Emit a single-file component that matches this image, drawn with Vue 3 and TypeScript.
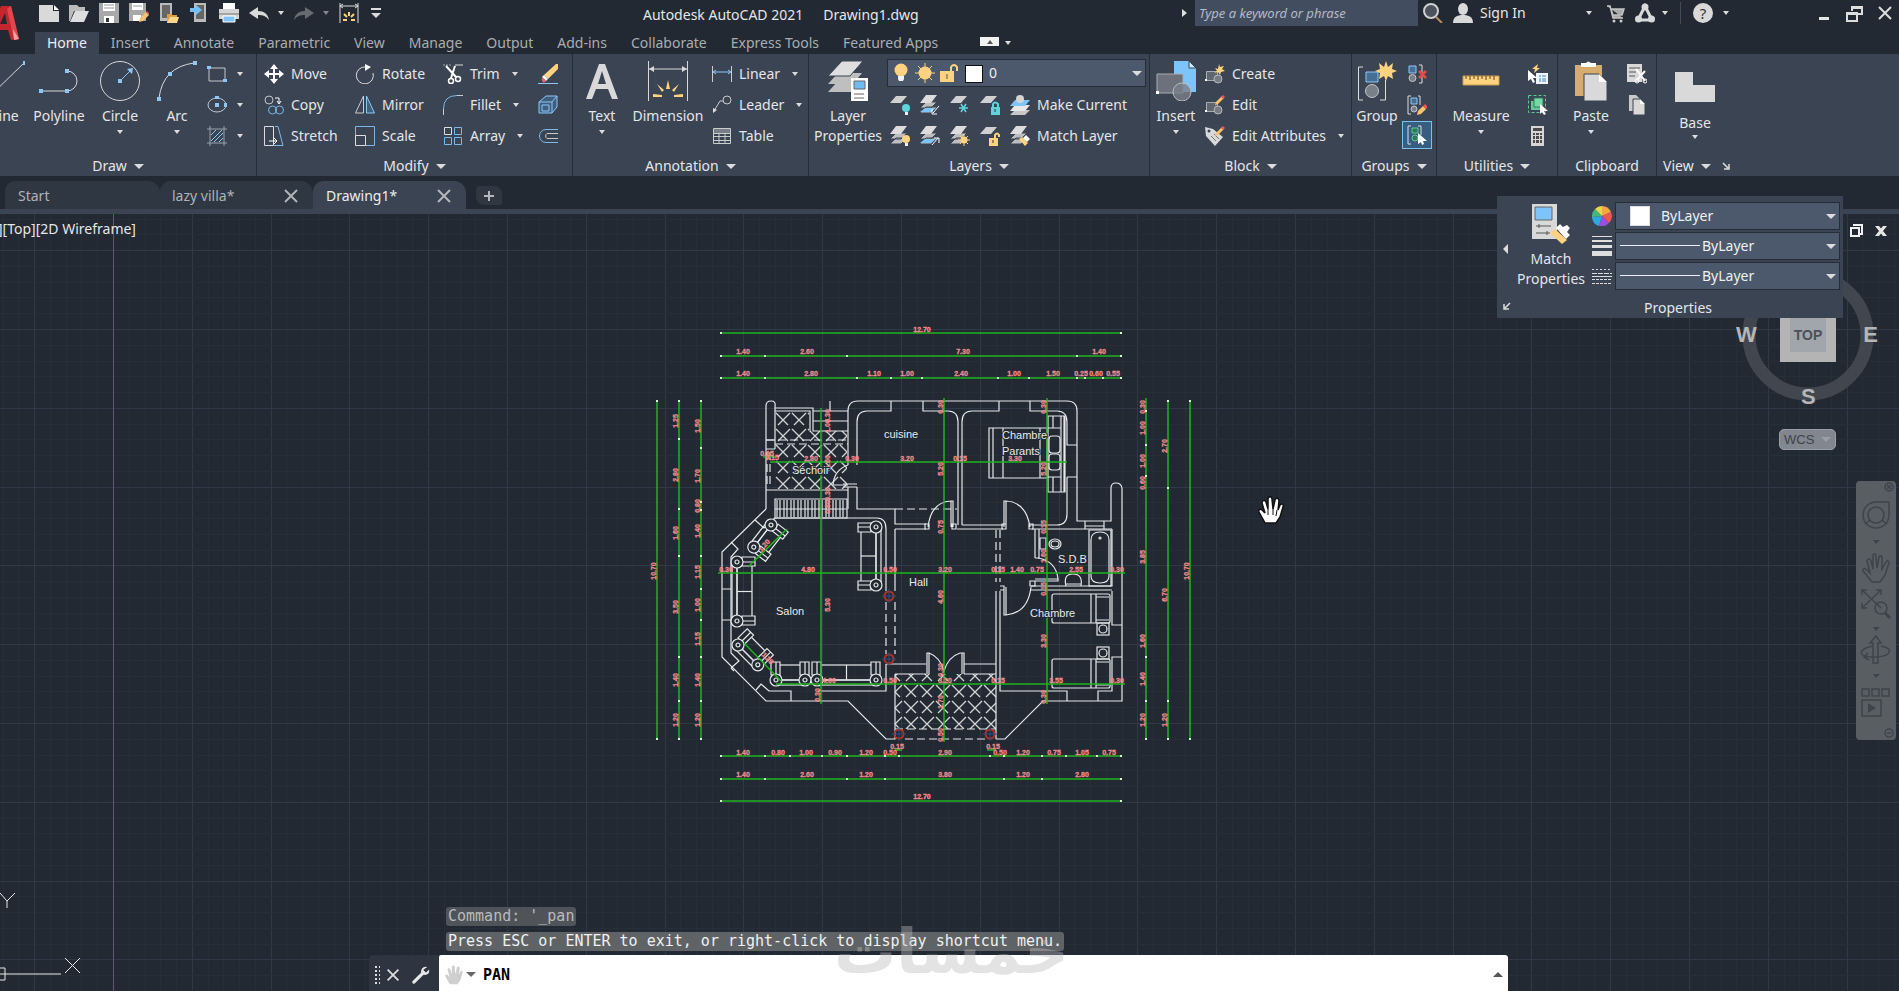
<script setup lang="ts">
import { ref } from 'vue'

interface Row { icon: string; label?: string; arrow?: boolean; on?: boolean; tip?: string }
interface Item { kind: 'big' | 'col' | 'layers'; cls?: string; icon?: string; lines?: string[]; arrow?: boolean; rows?: Row[] }
interface Panel { id: string; title: string; arrow: boolean; launcher?: boolean; items: Item[] }

const tabs = ['Home', 'Insert', 'Annotate', 'Parametric', 'View', 'Manage', 'Output', 'Add-ins', 'Collaborate', 'Express Tools', 'Featured Apps']
const command = ref('PAN')
const keyword = ref('')

const panels: Panel[] = [
  { id: 'draw', title: 'Draw', arrow: true, items: [
    { kind: 'big', cls: 'w-line', icon: 'line', lines: ['Line'] },
    { kind: 'big', cls: 'w-poly', icon: 'poly', lines: ['Polyline'] },
    { kind: 'big', cls: 'w-circle', icon: 'circle', lines: ['Circle'], arrow: true },
    { kind: 'big', cls: 'w-arc', icon: 'arc', lines: ['Arc'], arrow: true },
    { kind: 'col', cls: 'c-shapes', rows: [{ icon: 'rect', arrow: true, tip: 'Rectangle' }, { icon: 'ellipse', arrow: true, tip: 'Ellipse' }, { icon: 'hatch', arrow: true, tip: 'Hatch' }] },
  ] },
  { id: 'modify', title: 'Modify', arrow: true, items: [
    { kind: 'col', cls: 'c-mod1', rows: [{ icon: 'move', label: 'Move' }, { icon: 'copy', label: 'Copy' }, { icon: 'stretch', label: 'Stretch' }] },
    { kind: 'col', cls: 'c-mod2', rows: [{ icon: 'rotate', label: 'Rotate' }, { icon: 'mirror', label: 'Mirror' }, { icon: 'scale', label: 'Scale' }] },
    { kind: 'col', cls: 'c-mod3', rows: [{ icon: 'trim', label: 'Trim', arrow: true }, { icon: 'fillet', label: 'Fillet', arrow: true }, { icon: 'array', label: 'Array', arrow: true }] },
    { kind: 'col', rows: [{ icon: 'erase', tip: 'Erase' }, { icon: 'explode', tip: 'Explode' }, { icon: 'offset', tip: 'Offset' }] },
  ] },
  { id: 'annotation', title: 'Annotation', arrow: true, items: [
    { kind: 'big', cls: 'w-text', icon: 'text', lines: ['Text'], arrow: true },
    { kind: 'big', cls: 'w-dim', icon: 'dim', lines: ['Dimension'] },
    { kind: 'col', cls: 'c-ann', rows: [{ icon: 'linear', label: 'Linear', arrow: true }, { icon: 'leader', label: 'Leader', arrow: true }, { icon: 'table', label: 'Table' }] },
  ] },
  { id: 'layers', title: 'Layers', arrow: true, items: [
    { kind: 'big', cls: 'w-layer', icon: 'layerprops', lines: ['Layer', 'Properties'] },
    { kind: 'layers' },
  ] },
  { id: 'block', title: 'Block', arrow: true, items: [
    { kind: 'big', cls: 'w-insert', icon: 'insert', lines: ['Insert'], arrow: true },
    { kind: 'col', cls: 'c-block', rows: [{ icon: 'create', label: 'Create' }, { icon: 'edit', label: 'Edit' }, { icon: 'attr', label: 'Edit Attributes', arrow: true }] },
  ] },
  { id: 'groups', title: 'Groups', arrow: true, items: [
    { kind: 'big', cls: 'w-group', icon: 'group', lines: ['Group'] },
    { kind: 'col', cls: 'c-group', rows: [{ icon: 'ungroup', tip: 'Ungroup' }, { icon: 'groupedit', tip: 'Group Edit' }, { icon: 'groupsel', on: true, tip: 'Group Selection' }] },
  ] },
  { id: 'utilities', title: 'Utilities', arrow: true, items: [
    { kind: 'big', cls: 'w-measure', icon: 'measure', lines: ['Measure'], arrow: true },
    { kind: 'col', cls: 'c-util', rows: [{ icon: 'quick', tip: 'Quick Select' }, { icon: 'selectall', tip: 'Select All' }, { icon: 'calc', tip: 'Quick Calculator' }] },
  ] },
  { id: 'clipboard', title: 'Clipboard', arrow: false, items: [
    { kind: 'big', cls: 'w-paste', icon: 'paste', lines: ['Paste'], arrow: true },
    { kind: 'col', cls: 'c-clip', rows: [{ icon: 'cut', tip: 'Cut' }, { icon: 'copyclip', tip: 'Copy Clip' }] },
  ] },
  { id: 'view', title: 'View', arrow: true, launcher: true, items: [
    { kind: 'big', cls: 'w-base', icon: 'base', lines: ['Base'], arrow: true },
  ] },
]

const layerTools: Row[][] = [
  [{ icon: 'l-off', tip: 'Off' }, { icon: 'l-iso', tip: 'Isolate' }, { icon: 'l-freeze', tip: 'Freeze' }, { icon: 'l-lock', tip: 'Lock' }, { icon: 'l-make', label: 'Make Current' }],
  [{ icon: 'l-on', tip: 'Turn All Layers On' }, { icon: 'l-uniso', tip: 'Unisolate' }, { icon: 'l-thaw', tip: 'Thaw All' }, { icon: 'l-unlock', tip: 'Unlock' }, { icon: 'l-match', label: 'Match Layer' }],
]

/* drawing grid */
const range = (from: number, to: number) => Array.from({ length: to - from + 1 }, (_, i) => from + i)
const cell = 78.8
const gridX = range(-7, 190).map(k => ({ p: Math.round(113 + (k * cell) / 5), major: k % 5 === 0 }))
const gridY = range(-8, 90).map(k => ({ p: Math.round(329 + (k * cell) / 5), major: k % 5 === 0 }))

/* dimension chains: [x1, y1, x2, y2] */
const chains: number[][] = [
  [721, 333, 1121, 333], [721, 356, 1121, 356], [721, 378, 1121, 378],
  [721, 756, 1121, 756], [721, 779, 1121, 779], [721, 801, 1121, 801],
  [657, 401, 657, 739], [679, 401, 679, 739], [701, 401, 701, 739],
  [1146, 398, 1146, 739], [1168, 401, 1168, 739], [1190, 401, 1190, 739],
  [821, 408, 821, 704], [944, 398, 944, 742], [1047, 398, 1047, 704],
  [763, 457, 776, 457], [770, 462, 1067, 462], [718, 573, 1125, 573], [776, 684, 1125, 684],
  [748, 567, 787, 529], [744, 643, 781, 681], [895, 750, 902, 750], [987, 750, 996, 750],
]
const ticks: number[][] = [
  ...[721, 1121].map(x => [x, 333]),
  ...[721, 765, 847, 1077, 1121].map(x => [x, 356]),
  ...[721, 765, 857, 891, 922, 998, 1029, 1077, 1085, 1103, 1121].map(x => [x, 378]),
  ...[721, 765, 790, 822, 847, 885, 899, 990, 1004, 1042, 1066, 1097, 1121].map(x => [x, 756]),
  ...[721, 765, 847, 885, 1004, 1042, 1121].map(x => [x, 779]),
  ...[721, 1121].map(x => [x, 801]),
  ...[401, 739].map(y => [657, y]),
  ...[401, 439, 509, 556, 657, 701, 739].map(y => [679, y]),
  ...[401, 448, 502, 510, 556, 589, 620, 657, 701, 739].map(y => [701, y]),
  ...[411, 445, 476, 657, 701, 739].map(y => [1146, y]),
  ...[401, 488, 701, 739].map(y => [1168, y]),
  ...[401, 739].map(y => [1190, y]),
]
type Dim = [string, number, number]
const dimH: Dim[] = [
  ['12.70', 922, 329], ['1.40', 743, 351], ['2.60', 807, 351], ['7.30', 963, 351], ['1.40', 1099, 351],
  ['1.40', 743, 373], ['2.80', 811, 373], ['1.10', 874, 373], ['1.00', 907, 373], ['2.40', 961, 373], ['1.00', 1014, 373],
  ['1.50', 1053, 373], ['0.25', 1081, 373], ['0.60', 1096, 373], ['0.55', 1113, 373],
  ['0.15', 767, 453], ['0.15', 772, 457], ['2.80', 811, 458], ['0.30', 852, 458], ['3.20', 907, 458], ['0.15', 960, 458], ['3.30', 1015, 458],
  ['0.30', 726, 569], ['4.80', 808, 569], ['0.50', 890, 569], ['3.20', 945, 569], ['0.15', 998, 569], ['1.40', 1017, 569], ['0.75', 1037, 569], ['2.55', 1076, 569], ['0.30', 1117, 569],
  ['4.60', 829, 680], ['0.50', 890, 680], ['3.20', 945, 680], ['0.15', 998, 680], ['3.55', 1056, 680], ['0.30', 1117, 680],
  ['0.15', 897, 746], ['0.15', 993, 746],
  ['1.40', 743, 752], ['0.80', 778, 752], ['1.00', 806, 752], ['0.90', 835, 752], ['1.20', 866, 752], ['0.50', 890, 752], ['2.90', 945, 752],
  ['0.50', 1000, 752], ['1.20', 1023, 752], ['0.75', 1054, 752], ['1.05', 1082, 752], ['0.75', 1109, 752],
  ['1.40', 743, 774], ['2.60', 807, 774], ['1.20', 866, 774], ['3.80', 945, 774], ['1.20', 1023, 774], ['2.80', 1082, 774],
  ['12.70', 922, 796],
]
const dimV: Dim[] = [
  ['10.70', 653, 571],
  ['1.25', 675, 421], ['2.80', 675, 475], ['1.60', 675, 533], ['3.50', 675, 607], ['1.40', 675, 680], ['1.20', 675, 720],
  ['1.50', 697, 426], ['1.70', 697, 476], ['0.80', 697, 506], ['1.40', 697, 531], ['1.15', 697, 572], ['1.00', 697, 605], ['1.15', 697, 639], ['1.40', 697, 680], ['1.20', 697, 720],
  ['0.30', 1142, 407], ['1.00', 1142, 428], ['1.00', 1142, 461], ['0.60', 1142, 483], ['3.85', 1142, 557], ['1.60', 1142, 641], ['1.40', 1142, 679], ['1.20', 1142, 720],
  ['2.70', 1164, 446], ['6.70', 1164, 595], ['1.20', 1164, 720], ['10.70', 1186, 571],
  ['0.30', 827, 416], ['1.00', 827, 426], ['1.60', 827, 462], ['0.30', 827, 494], ['0.80', 827, 507], ['5.30', 827, 605], ['0.30', 817, 695],
  ['0.30', 940, 407], ['5.20', 940, 469], ['0.75', 940, 527], ['4.60', 940, 597], ['0.30', 940, 670], ['1.70', 940, 702], ['0.50', 940, 735],
  ['0.30', 1043, 407], ['5.20', 1043, 469], ['0.15', 1043, 527], ['1.60', 1043, 556], ['0.15', 1043, 589], ['3.30', 1043, 641], ['0.30', 1043, 697],
]
const rooms: Dim[] = [
  ['cuisine', 884, 438], ['Chambre', 1002, 439], ['Parants', 1002, 455], ['Séchoir', 792, 474],
  ['Salon', 776, 615], ['Hall', 909, 586], ['S.D.B', 1058, 563], ['Chambre', 1030, 617],
]
const sofas = [
  { x: 876, y: 585, a: 180, len: 58 }, { x: 737, y: 562, a: 0, len: 59 },
  { x: 776, y: 680, a: -90, len: 29 }, { x: 817, y: 680, a: -90, len: 59 },
  { x: 771, y: 525, a: 38, len: 28 }, { x: 738, y: 645, a: -45, len: 28 },
]
const columns = [[889, 596], [889, 659], [899, 734], [990, 734]]
const stairs = range(0, 9).map(i => 777 + i * 7)
</script>

<template>
  <div class="app">
    <svg class="defs" aria-hidden="true">
      <defs>
        <symbol id="new" viewBox="0 0 20 20"><path d="M0 2h14v6h6v11H0z" fill="#d9d9d9"/><path d="M15 2l5 5h-5z" fill="#fff"/></symbol>
        <symbol id="open" viewBox="0 0 20 20"><path d="M0 2h8l2 2h6v4H5L1 18H0z" fill="#bcbcbc"/><path d="M6 8h14l-5 11H1z" fill="#dedede"/></symbol>
        <symbol id="save" viewBox="0 0 20 20"><path d="M0 0h20v20H0z" fill="#a8a8a8"/><path d="M4 0h12v8H4zM5 13h10v7H5z" fill="#fff"/><path d="M5 2h10M5 5h10" stroke="#999"/><path d="M7 15h3v4H7z" fill="#333"/></symbol>
        <symbol id="saveas" viewBox="0 0 20 20"><path d="M0 0h17v18H0z" fill="#a8a8a8"/><path d="M3 0h11v7H3zM4 12h8v6H4z" fill="#fff"/><path d="M4 3h9" stroke="#999"/><path d="M10 19l1-4 6-6 3 3-6 6z" fill="#f6c170"/><path d="M17 9l1-1 3 3-1 1z" fill="#e55"/></symbol>
        <symbol id="mobile" viewBox="0 0 20 20"><path d="M1 0h12v18H1z" fill="#bbb"/><path d="M3 2h8v13H3z" fill="#666"/><path d="M8 11h4l1 1h5v8H8z" fill="#d99f45"/><path d="M11 14h9l-2 6H8z" fill="#ffd78a"/></symbol>
        <symbol id="tomobile" viewBox="0 0 20 20"><path d="M5 0h12v19H5z" fill="#bbb"/><path d="M7 2h8v14H7z" fill="#666"/><path d="M1 5h6V2l6 5-6 5V9H1z" fill="#6fc0ff"/></symbol>
        <symbol id="print" viewBox="0 0 20 20"><path d="M4 0h12v6H4z" fill="#fff"/><path d="M0 6h20v10H0z" fill="#d4d4d4"/><path d="M0 11h20" stroke="#777"/><path d="M4 13h12v6H4z" fill="#82c4f5" stroke="#fff"/></symbol>
        <symbol id="undo" viewBox="0 0 20 20"><path d="M0 10l9-6v4c6 0 10 3 11 9-3-4-6-5-11-5v4z" fill="#d9d9d9"/></symbol>
        <symbol id="redo" viewBox="0 0 20 20"><path d="M20 10l-9-6v4C5 8 1 11 0 17c3-4 6-5 11-5v4z" fill="#666b72"/></symbol>
        <symbol id="qdim" viewBox="0 0 20 20"><path d="M1 0v20M19 0v20M1 3h18M4 1L1 3l3 2M16 1l3 2-3 2" stroke="#ddd" fill="none"/><path d="M10 9v4M5 11l3 3M15 11l-3 3M4 17h4M16 17h-4" stroke="#ffd27f" stroke-width="2"/></symbol>
        <symbol id="search" viewBox="0 0 20 20"><circle cx="8" cy="8" r="7" fill="#4c535d" stroke="#cfcfcf" stroke-width="2"/><path d="M13 14l6 6" stroke="#b98a60" stroke-width="2"/></symbol>
        <symbol id="user" viewBox="0 0 20 20"><ellipse cx="10" cy="6" rx="5" ry="6" fill="#d9d9d9"/><path d="M0 20c0-6 4-8 10-8s10 2 10 8z" fill="#d9d9d9"/></symbol>
        <symbol id="cart" viewBox="0 0 20 20"><path d="M1 3h3l3 12h10M5 6h13l-2 6H7z" fill="#aaa" stroke="#c4c4c4" stroke-width="1.5"/><circle cx="8" cy="18" r="1.5" fill="#ccc"/><circle cx="15" cy="18" r="1.5" fill="#ccc"/></symbol>
        <symbol id="a360" viewBox="0 0 20 20"><path d="M10 3L3 17h14z" fill="none" stroke="#d9d9d9" stroke-width="3"/><circle cx="10" cy="4" r="3.500" fill="#d9d9d9"/><circle cx="3.500" cy="16" r="3.500" fill="#d9d9d9"/><circle cx="16.500" cy="16" r="3.500" fill="#d9d9d9"/></symbol>
        <symbol id="min" viewBox="0 0 20 20"><path d="M5 14h10v3H5z" fill="#e6e6e6"/></symbol>
        <symbol id="restore" viewBox="0 0 20 20"><path d="M8 8V4h10v7h-4M3 10h10v8H3zM3 11h10M8 5h10" fill="none" stroke="#ddd" stroke-width="2"/></symbol>
        <symbol id="vrestore" viewBox="0 0 14 14"><path d="M4 1h9v9h-2M2 4h8v8H2z" fill="none" stroke="#f0f0f0" stroke-width="2"/></symbol>
        <symbol id="vclose" viewBox="0 0 14 14"><path d="M1 2h4l8 10H9zM9 2h4L5 12H1z" fill="#e6e6e6"/></symbol>
        <symbol id="close" viewBox="0 0 20 20"><path d="M4 4l12 12M16 4L4 16" stroke="#ddd" stroke-width="2"/></symbol>

        <symbol id="line" viewBox="0 0 40 40"><path d="M2 38L39 2" stroke="#d8d8d8"/><path d="M38 0h4v4h-4z" fill="#8ec6f4"/></symbol>
        <symbol id="poly" viewBox="0 0 40 40"><path d="M2 30h26a10 10 0 0 0 0-20" fill="none" stroke="#d8d8d8"/><path d="M0 28h4v4H0zM26 28h4v4h-4zM26 8h4v4h-4z" fill="#8ec6f4"/></symbol>
        <symbol id="circle" viewBox="0 0 40 40"><circle cx="20" cy="20" r="19.500" fill="none" stroke="#d8d8d8"/><path d="M20 20L31 9" stroke="#8ec6f4"/><path d="M18 18h4v4h-4zM33 7l-1 6-5-5z" fill="#8ec6f4"/></symbol>
        <symbol id="arc" viewBox="0 0 40 40"><path d="M2 37Q6 6 37 2" fill="none" stroke="#d8d8d8"/><path d="M0 36h4v4H0zM11 11h4v4h-4zM36 0h4v4h-4z" fill="#8ec6f4"/></symbol>
        <symbol id="rect" viewBox="0 0 20 20"><path d="M2 4h16v13H2z" fill="none" stroke="#c4c7cc"/><path d="M0 2h4v3H0zM16 15h4v3h-4z" fill="#8ec6f4"/></symbol>
        <symbol id="ellipse" viewBox="0 0 20 20"><ellipse cx="10" cy="10" rx="9" ry="7" fill="none" stroke="#c4c7cc"/><path d="M8 1h4v3H8zM8 8h4v4H8zM17 8h3v4h-3z" fill="#8ec6f4"/></symbol>
        <symbol id="hatch" viewBox="0 0 20 20"><path d="M3 0v20M17 0v20M0 3h20M0 17h20" stroke="#9aa1ab"/><path d="M4 9l5-5M4 15L15 4M7 16l9-9M12 16l4-4" stroke="#8ec6f4"/></symbol>
        <symbol id="move" viewBox="0 0 20 20"><path d="M10 0l4 5h-3v4h4V6l5 4-5 4v-3h-4v4h3l-4 5-4-5h3v-4H5v3l-5-4 5-4v3h4V5H6z" fill="#fff"/></symbol>
        <symbol id="copy" viewBox="0 0 20 20"><g fill="none"><circle cx="5" cy="5" r="4" stroke="#c4c7cc"/><circle cx="8.500" cy="15" r="4" stroke="#7cb7e8"/><circle cx="15.500" cy="15" r="4" stroke="#7cb7e8"/><path d="M11 3h4v5M13 6l2 3 2-3" stroke="#fff"/></g></symbol>
        <symbol id="stretch" viewBox="0 0 20 20"><path d="M.5.5h9v19H.5z" fill="none" stroke="#ddd"/><path d="M11 .5h3l5 19h-9" fill="none" stroke="#7cb7e8"/><path d="M5 15h7M10 12l3 3-3 3" stroke="#fff" fill="none"/></symbol>
        <symbol id="rotate" viewBox="0 0 20 20"><path d="M11 3a8.500 8.500 0 1 0 7 6" fill="none" stroke="#ddd"/><path d="M10 0l6 3-6 4z" fill="#fff"/></symbol>
        <symbol id="mirror" viewBox="0 0 20 20"><path d="M8.500 1v17H.5z" fill="none" stroke="#ccc"/><path d="M11.500 1v17h8z" fill="#405f80" stroke="#8ec6f4"/></symbol>
        <symbol id="scale" viewBox="0 0 20 20"><path d="M.5.5h19v19H.5z" fill="none" stroke="#7cb7e8"/><path d="M.5 9.500h10v10H.5z" fill="none" stroke="#ddd"/></symbol>
        <symbol id="trim" viewBox="0 0 20 20"><path d="M0 1h8" stroke="#aaa" stroke-dasharray="2 1"/><path d="M12 1h8" stroke="#ddd"/><path d="M3 2l10 11M12 2L8 14" stroke="#fff" stroke-width="2"/><circle cx="15" cy="15" r="2.500" fill="none" stroke="#fff" stroke-width="1.500"/><circle cx="8" cy="17" r="2.500" fill="none" stroke="#fff" stroke-width="1.500"/></symbol>
        <symbol id="fillet" viewBox="0 0 20 20"><path d="M.5 20v-6" stroke="#ccc"/><path d="M.5 14Q.5.5 14 .5" fill="none" stroke="#7cb7e8"/><path d="M14 .5h6" stroke="#ccc"/></symbol>
        <symbol id="array" viewBox="0 0 20 20"><g fill="none"><path d="M1.500 1.500h7v7h-7z" stroke="#ddd"/><path d="M11.500 1.500h7v7h-7zM1.500 11.500h7v7h-7zM11.500 11.500h7v7h-7z" stroke="#7cb7e8"/></g></symbol>
        <symbol id="erase" viewBox="0 0 20 20"><path d="M0 19.500h20" stroke="#8ec6f4"/><path d="M6 11L18 0h2v5L10 15z" fill="#ffd27f"/><path d="M6 11l4 4-2 2-4-4z" fill="#fff"/><path d="M4 13l4 4c-2 3-5 1-4-4z" fill="#e66"/></symbol>
        <symbol id="explode" viewBox="0 0 20 20"><path d="M1 7l7-6h11v11l-5 6H1zM1 7h13v11M14 7l5-6M4 10h7v6H4z" fill="#405f80" stroke="#8ec6f4"/></symbol>
        <symbol id="offset" viewBox="0 0 20 20"><path d="M20 3.500H8a6 6 0 0 0 0 13h12" fill="none" stroke="#7cb7e8"/><path d="M20 7.500H9a3 3 0 0 0 0 5h11" fill="none" stroke="#ccc"/></symbol>
        <symbol id="text" viewBox="0 0 40 40"><path d="M4 38L17 3h6l13 35h-6l-4-10H14l-4 10zM16 23h8L20 10z" fill="#d9d9d9" fill-rule="evenodd"/></symbol>
        <symbol id="dim" viewBox="0 0 40 40"><path d="M.5 0v40M39.500 0v40M1 8h38" stroke="#d8d8d8"/><path d="M1 8l5-3v6zM39 8l-5-3v6z" fill="#d8d8d8"/><path d="M18 28l2-9 2 9zM9 23l7 6-2 2zM31 23l-7 6 2 2zM5 33l9 1v2H5zM35 33l-9 1v2h9z" fill="#ffd27f"/></symbol>
        <symbol id="linear" viewBox="0 0 20 20"><path d="M.5 2v16M19.500 2v16" stroke="#ccc"/><path d="M1 8h18M4 6L1 8l3 2M16 6l3 2-3 2" fill="none" stroke="#8ec6f4"/></symbol>
        <symbol id="leader" viewBox="0 0 20 20"><circle cx="15" cy="5" r="4" fill="none" stroke="#ccc"/><path d="M11 6H8L2 16" fill="none" stroke="#ccc"/><path d="M1 18V13l4 2z" fill="#ddd"/></symbol>
        <symbol id="table" viewBox="0 0 20 20"><path d="M2 3h16v4H2z" fill="#777e88"/><path d="M1.500 2.500h17v15h-17zM2 7.500h16M2 10.500h16M2 14.500h16M7 8v10M13 8v10" fill="none" stroke="#ccc"/></symbol>
        <symbol id="layerprops" viewBox="0 0 40 40"><path d="M0 31L10 20h22L24 31zM0 23l10-11h24L25 23z" fill="#bfbfbf"/><path d="M0 15L14 0h21L22 15z" fill="#dedede" stroke="#3b4453"/><path d="M23 17h17v23H23z" fill="#fff"/><path d="M26 20h11v8H26z" fill="#6fbcf5" stroke="#666"/><path d="M26 33h10M26 37h10" stroke="#666"/></symbol>
        <symbol id="sheet" viewBox="0 0 20 20"><path d="M0 8l6-7h11l-6 7z" fill="#d0d0d0"/></symbol>
        <symbol id="stack" viewBox="0 0 20 20"><path d="M0 18l6-6h11l-6 6zM0 13l6-6h11l-6 6z" fill="#bdbdbd" stroke="#3b4453"/><path d="M0 8l6-8h11l-6 8z" fill="#dcdcdc"/></symbol>
        <symbol id="l-off" viewBox="0 0 20 20"><use href="#sheet"/><circle cx="16" cy="13" r="4" fill="#5fd3dc"/><path d="M15 17h3v3h-3z" fill="#eee"/></symbol>
        <symbol id="l-on" viewBox="0 0 20 20"><use href="#stack"/><circle cx="16" cy="13" r="4" fill="#ffd27f"/><path d="M15 17h3v3h-3z" fill="#eee"/></symbol>
        <symbol id="l-iso" viewBox="0 0 20 20"><use href="#stack"/><path d="M0 17l5-4h11l-5 4z" fill="#7cc4fa"/><path d="M19 11l-6 7M12 14v5h5" fill="none" stroke="#fff"/></symbol>
        <symbol id="l-uniso" viewBox="0 0 20 20"><use href="#stack"/><path d="M0 17l5-4h11l-5 4z" fill="#7cc4fa"/><path d="M12 19l6-7M14 12h5v5" fill="none" stroke="#fff"/></symbol>
        <symbol id="l-freeze" viewBox="0 0 20 20"><use href="#sheet"/><path d="M9 13h9M11 9l5 8M16 9l-5 8" stroke="#5fd3dc" stroke-width="1.500"/></symbol>
        <symbol id="l-thaw" viewBox="0 0 20 20"><use href="#stack"/><circle cx="14" cy="14" r="3.500" fill="#ffd27f"/><path d="M14 8v12M8 14h12M10 10l8 8M18 10l-8 8" stroke="#ffd27f"/></symbol>
        <symbol id="l-lock" viewBox="0 0 20 20"><use href="#sheet"/><path d="M11 12h9v8h-9z" fill="#5fd3dc"/><path d="M13 12V9q2-3 5 0v3" fill="none" stroke="#5fd3dc" stroke-width="2"/><path d="M15 14v3" stroke="#333"/></symbol>
        <symbol id="l-unlock" viewBox="0 0 20 20"><use href="#sheet"/><path d="M9 12h9v8H9z" fill="#ffd27f"/><path d="M15 12V9q2-3 4 0v2" fill="none" stroke="#ffd27f" stroke-width="2"/><path d="M13 14v3" stroke="#333"/></symbol>
        <symbol id="l-make" viewBox="0 0 20 20"><path d="M0 20l5-5h15l-5 5z" fill="#c8c8c8"/><path d="M0 16l5-6h15l-5 6z" fill="#e8e8e8"/><path d="M0 11l5-6h15l-5 6z" fill="#7cc4fa"/><circle cx="10" cy="4" r="4" fill="#d4d4d4"/></symbol>
        <symbol id="l-match" viewBox="0 0 20 20"><use href="#stack"/><path d="M9 13l3-2 6 6-3 3z" fill="#ffd27f"/><path d="M13 12l3-3 4 4-3 3z" fill="#fff"/></symbol>
        <symbol id="bulb" viewBox="0 0 20 20"><circle cx="10" cy="7" r="6.500" fill="#ffd27f"/><path d="M7 13h6v3l-1 2H8l-1-2z" fill="#eef3f7"/></symbol>
        <symbol id="sun" viewBox="0 0 20 20"><circle cx="10" cy="10" r="6.500" fill="#ffd27f"/><path d="M10 0v20M0 10h20M3 3l14 14M17 3L3 17" stroke="#ffd27f"/></symbol>
        <symbol id="padlock" viewBox="0 0 20 20"><path d="M1 8h14v11H1z" fill="#ffd27f"/><path d="M12 8V4q3-4 6 0v4" fill="none" stroke="#ffd27f" stroke-width="2"/><path d="M8 11v5" stroke="#555"/></symbol>
        <symbol id="insert" viewBox="0 0 40 40"><path d="M18 0h15l7 7v24H18z" fill="#7cc4fa"/><path d="M33 0v7h7z" fill="#cde8fb" stroke="#3b4453"/><path d="M1 13h26v19H1z" fill="#6c717c" stroke="#a9adb3"/><circle cx="26" cy="31" r="9" fill="#7a7f88" fill-opacity=".8" stroke="#b9bcc1"/><path d="M0 30h3v3H0z" fill="#fff"/></symbol>
        <symbol id="blk" viewBox="0 0 20 20"><path d="M1.500 7.500h11v9h-11z" fill="#60666f" stroke="#a9adb3"/><circle cx="13" cy="15" r="4" fill="#777c85" stroke="#b5b8bd"/><path d="M0 15h2v2H0z" fill="#fff"/></symbol>
        <symbol id="create" viewBox="0 0 20 20"><use href="#blk"/><path d="M14 0l1 3 4-1-2 3 3 2-4 1-1 3-2-3-4 1 3-2-2-3 3 1z" fill="#ffd27f"/></symbol>
        <symbol id="edit" viewBox="0 0 20 20"><use href="#blk"/><path d="M10 10l1-3 6-6 2 2-6 6z" fill="#ffc06a"/><path d="M16 2l2-2 2 2-2 2z" fill="#e55"/></symbol>
        <symbol id="attr" viewBox="0 0 20 20"><path d="M0 1l8 2 10 8-8 9L1 10z" fill="#d9d9d9"/><circle cx="4" cy="5" r="1.500" fill="#3b4453"/><path d="M6 10l5 5M9 8l5 5" stroke="#777"/><path d="M10 10l1-3 6-6 2 2-6 6z" fill="#ffc06a"/><path d="M16 2l2-2 2 2-2 2z" fill="#e55"/></symbol>
        <symbol id="group" viewBox="0 0 40 40"><path d="M6 6H1.500v33H6M23 39h5.500V19" fill="none" stroke="#ddd"/><path d="M9 11h12v10H9z" fill="#466f98" stroke="#8ec6f4"/><circle cx="15" cy="30" r="6.500" fill="#7a7f88" stroke="#c3c6ca"/><path d="M29 0l2 6 5-4-1 6 5 2-5 2 1 6-5-3-2 5-2-5-5 3 1-6-5-2 5-2-1-6 5 4z" fill="#ffd27f"/></symbol>
        <symbol id="gr" viewBox="0 0 20 20"><path d="M4 1H1v18h3" fill="none" stroke="#ddd"/><path d="M4 3h6v6H4z" fill="#466f98" stroke="#8ec6f4"/><circle cx="7" cy="14" r="3" fill="#7a7f88" stroke="#c3c6ca"/></symbol>
        <symbol id="ungroup" viewBox="0 0 20 20"><path d="M2 2h7v7H2z" fill="#466f98" stroke="#8ec6f4"/><circle cx="5.500" cy="14" r="3.500" fill="#7a7f88" stroke="#c3c6ca"/><path d="M12 1h3v18h-3" fill="none" stroke="#ddd"/><path d="M12 7l7 7M19 7l-7 7" stroke="#e04b4b" stroke-width="2.500"/></symbol>
        <symbol id="groupedit" viewBox="0 0 20 20"><use href="#gr"/><path d="M11 1h2v9" fill="none" stroke="#ddd"/><path d="M10 20l1-4 5-5 3 3-5 5z" fill="#ffc06a"/><path d="M16 11l2-2 3 3-2 2z" fill="#e55"/></symbol>
        <symbol id="groupsel" viewBox="0 0 20 20"><path d="M4 1H1v18h3M11 1h3v9" fill="none" stroke="#ddd"/><path d="M5 3h6v5H5z" fill="#2c7a5a" stroke="#64c795"/><circle cx="8" cy="13" r="3" fill="#2c7a5a" stroke="#64c795"/><path d="M11 8v11l3-2 1 3 2-1-1-3h4z" fill="#fff"/></symbol>
        <symbol id="measure" viewBox="0 0 40 40"><path d="M2 15h36v9H2z" fill="#ffd27f" stroke="#c89a4e"/><path d="M5 15v3M9 15v4M13 15v3M17 15v4M21 15v3M25 15v4M29 15v3M33 15v4" stroke="#5a4520"/></symbol>
        <symbol id="quick" viewBox="0 0 20 20"><path d="M8 9h12v11H8z" fill="#eef4fa"/><path d="M11 12h2M11 15h2M11 17h2M14 12h4M14 15h4M14 17h4" stroke="#3c82c4"/><path d="M10 0L4 5h3l-1 4 6-5H9z" fill="#ffd27f"/><path d="M0 6v11l3-2 2 4 2-1-2-4h4z" fill="#fff"/></symbol>
        <symbol id="selectall" viewBox="0 0 20 20"><path d="M.5.5h17v17H.5z" fill="none" stroke="#64c795" stroke-dasharray="3 2"/><path d="M3 6h9v9H3z" fill="#64c795"/><path d="M6 3h9v9H6z" fill="#79d9a5" stroke="#2c7a5a"/><path d="M12 9v10l2-2 2 3 2-1-2-3h4z" fill="#fff"/></symbol>
        <symbol id="calc" viewBox="0 0 20 20"><path d="M3 0h13v20H3z" fill="#d6d6d6"/><path d="M5 2h9v3H5zM5 7h2v2H5zM8 7h3v2H8zM12 7h2v2h-2zM5 10h2v3H5zM8 10h3v3H8zM12 10h2v3h-2zM5 14h2v3H5zM8 14h3v3H8zM12 14h2v3h-2z" fill="#4b4b4b"/></symbol>
        <symbol id="paste" viewBox="0 0 40 40"><path d="M4 4h27v31H4z" fill="#d8ab6e"/><path d="M10 2h5q2-3 5 0h5v4H10z" fill="#fff"/><path d="M13 13h15l8 8v19H13z" fill="#d9d9d9" stroke="#3b4453"/><path d="M28 13l8 8h-8z" fill="#fff"/></symbol>
        <symbol id="cut" viewBox="0 0 20 20"><path d="M0 0h15v18H0z" fill="#d9d9d9"/><path d="M2 4h11M2 8h7M2 12h6" stroke="#555"/><path d="M9 5l9 12M18 7L10 16" stroke="#fff" stroke-width="2"/><circle cx="10" cy="17" r="2" fill="none" stroke="#fff"/><circle cx="18" cy="17" r="2" fill="none" stroke="#fff"/></symbol>
        <symbol id="copyclip" viewBox="0 0 20 20"><path d="M2 0h7l4 4v12H2z" fill="#c9c9c9"/><path d="M6 4h7l5 5v11H6z" fill="#d9d9d9" stroke="#3b4453"/><path d="M13 4l5 5h-5z" fill="#fff"/></symbol>
        <symbol id="base" viewBox="0 0 40 40"><path d="M0 4h18v13h22v17H0z" fill="#d9d9d9"/></symbol>
        <symbol id="matchprops" viewBox="0 0 40 40"><path d="M1 0h25v35H1z" fill="#d9d9d9"/><path d="M4 3h17v13H4z" fill="#7cc4fa" stroke="#666"/><path d="M5 22h15M5 29h14M8 20v4M16 27v4" stroke="#555"/><path d="M19 29l5-4 12 11-5 4z" fill="#ffd27f"/><path d="M25 24l4-4 3 3 4-2 3 3-3 4 3 3-4 4z" fill="#fff"/></symbol>
        <symbol id="wheel" viewBox="0 0 20 20"><path d="M10 10V0a10 10 0 0 1 9 6z" fill="#f5a742"/><path d="M10 10l9-4a10 10 0 0 1-2 11z" fill="#f0584f"/><path d="M10 10l7 7a10 10 0 0 1-10 3z" fill="#9a4fe0"/><path d="M10 10l-3 10a10 10 0 0 1-7-9z" fill="#2fa8e0"/><path d="M10 10L0 11a10 10 0 0 1 3-8z" fill="#45b97c"/><path d="M10 10L3 3a10 10 0 0 1 7-3z" fill="#e9d74a"/></symbol>
        <symbol id="weights" viewBox="0 0 20 20"><path d="M0 0h20v1H0zM0 4h20v2H0zM0 9h20v3H0zM0 15h20v5H0z" fill="#dedede"/></symbol>
        <symbol id="types" viewBox="0 0 20 20"><path d="M0 3.500h20" stroke="#ddd" stroke-dasharray="2 2"/><path d="M0 7.500h20" stroke="#ddd" stroke-dasharray="5 1"/><path d="M0 10.500h20" stroke="#ddd"/><path d="M0 13.500h20M0 17.500h20" stroke="#ddd" stroke-dasharray="3 1"/></symbol>
        <symbol id="launch" viewBox="0 0 8 8"><path d="M1 1l5 5M7 2v5H2" fill="none" stroke="#ddd" stroke-width="1.500"/></symbol>
        <symbol id="launch-left" viewBox="0 0 8 8"><path d="M7 1L2 6M1 2v5h5" fill="none" stroke="#ddd" stroke-width="1.500"/></symbol>
        <symbol id="hand" viewBox="0 0 28 28"><path d="M8 27L2 16c-1-3 2-3 3-2l3 3L5 7c0-3 3-3 4-1l2 7V3c0-3 4-3 4 0l1 10 2-9c1-3 4-2 4 1l-1 9 2-5c2-2 4-1 3 2l-3 10-4 6z"/></symbol>
      </defs>
    </svg>

    <header class="titlebar">
      <svg class="logo" viewBox="0 0 20 36" aria-label="AutoCAD"><path d="M-16 35L1 1h10l8 33-8 1-3-10H-4l-5 10z" fill="#c4262e"/><path d="M5 8l2 11H0z" fill="#222932"/><path d="M11 1l8 33-5 1L7 4z" fill="#e0474d"/><path d="M13 24l6 10-5 1z" fill="#e9a3a3"/></svg>
      <nav class="quick" aria-label="Quick access">
        <button v-for="q in ['new','open','save','saveas','mobile','tomobile','print','undo']" :key="q" :aria-label="q"><svg class="ic"><use :href="'#' + q"/></svg></button>
        <i class="dn"></i>
        <button class="redo" aria-label="redo"><svg class="ic"><use href="#redo"/></svg></button>
        <i class="dn dim"></i>
        <button class="redo" aria-label="dimension"><svg class="ic"><use href="#qdim"/></svg></button>
        <button class="more" aria-label="Customize"><i class="bar"></i><i class="dn big-dn"></i></button>
      </nav>
      <h1><span>Autodesk AutoCAD 2021</span><span>Drawing1.dwg</span></h1>
      <div class="tools">
        <i class="rt"></i>
        <input v-model="keyword" class="keyword" type="text" placeholder="Type a keyword or phrase" aria-label="Search">
        <button class="t-search" aria-label="Search"><svg class="ic"><use href="#search"/></svg></button>
        <button class="t-user"><svg class="ic"><use href="#user"/></svg><span>Sign In</span><i class="dn"></i></button>
        <button class="t-cart" aria-label="Store"><svg class="ic"><use href="#cart"/></svg></button>
        <button class="t-a360" aria-label="Apps"><svg class="ic"><use href="#a360"/></svg><i class="dn"></i></button>
        <button class="t-help" aria-label="Help"><b>?</b><i class="dn"></i></button>
        <button class="t-min" aria-label="Minimize"><svg class="ic"><use href="#min"/></svg></button>
        <button class="t-res" aria-label="Restore"><svg class="ic"><use href="#restore"/></svg></button>
        <button class="t-close" aria-label="Close"><svg class="ic"><use href="#close"/></svg></button>
      </div>
    </header>

    <nav class="tabs">
      <button v-for="(t, i) in tabs" :key="t" :class="{ active: i === 0 }">{{ t }}</button>
      <button class="collapse" aria-label="Minimize ribbon"><i class="up"></i></button><i class="dn"></i>
    </nav>

    <section class="ribbon">
      <div v-for="p in panels" :key="p.id" class="panel" :class="p.id">
        <div class="body">
          <template v-for="(it, n) in p.items" :key="n">
            <button v-if="it.kind === 'big'" class="big" :class="it.cls">
              <svg class="ic40"><use :href="'#' + it.icon"/></svg>
              <span v-for="l in it.lines" :key="l">{{ l }}</span>
              <i v-if="it.arrow" class="dn"></i>
            </button>
            <div v-else-if="it.kind === 'col'" class="col" :class="it.cls">
              <button v-for="r in it.rows" :key="r.icon" class="row" :class="{ on: r.on }" :aria-label="r.tip">
                <svg class="ic"><use :href="'#' + r.icon"/></svg>
                <span v-if="r.label">{{ r.label }}</span>
                <i v-if="r.arrow" class="dn"></i>
              </button>
            </div>
            <div v-else class="col layercol">
              <div class="combo layercombo">
                <select aria-label="Layer"><option>0</option></select>
                <span class="deco"><svg class="ic"><use href="#bulb"/></svg><svg class="ic"><use href="#sun"/></svg><svg class="ic"><use href="#padlock"/></svg><i class="swatch"></i></span>
                <i class="dn big-dn"></i>
              </div>
              <div v-for="(line, k) in layerTools" :key="k" class="toolline">
                <button v-for="r in line" :key="r.icon" class="row" :aria-label="r.tip">
                  <svg class="ic"><use :href="'#' + r.icon"/></svg><span v-if="r.label">{{ r.label }}</span>
                </button>
              </div>
            </div>
          </template>
        </div>
        <div class="ptitle">{{ p.title }}<i v-if="p.arrow" class="dn big-dn"></i><svg v-if="p.launcher" class="launch"><use href="#launch"/></svg></div>
      </div>
    </section>

    <nav class="files">
      <div class="file first"><button>Start</button></div>
      <div class="file"><button>lazy villa*</button><button class="x" aria-label="Close lazy villa"><svg class="ic"><use href="#close"/></svg></button></div>
      <div class="file active"><button>Drawing1*</button><button class="x" aria-label="Close Drawing1"><svg class="ic"><use href="#close"/></svg></button></div>
      <button class="plus" aria-label="New tab"></button>
    </nav>

    <main class="canvas">
      <svg class="model" aria-label="Floor plan">
        <defs>
          <pattern id="tiles" width="16" height="16" x="775" y="412" patternUnits="userSpaceOnUse">
            <path d="M1 1l12 12M15 1L3 13" stroke="#d2d4d6" stroke-width="1.300"/>
          </pattern>
        </defs>
        <g transform="translate(0 -214)">
          <rect v-for="g in gridX" :key="'x' + g.p" :x="g.p" y="214" width="1" height="2000" :fill="g.major ? '#303947' : '#262e38'"/>
          <rect v-for="g in gridY" :key="'y' + g.p" x="0" :y="g.p" width="4000" height="1" :fill="g.major ? '#303947' : '#262e38'"/>
          <rect x="113" y="214" width="1" height="2000" fill="#2f7d31"/>

          <rect x="775" y="412" width="72" height="77" fill="url(#tiles)"/>
          <rect x="809" y="411" width="38" height="20" fill="#222932"/>
          <rect x="895" y="674" width="101" height="55" fill="url(#tiles)"/>

          <g fill="none" stroke="#e6e8ea" stroke-width="1.200">
            <!-- outer walls -->
            <path d="M766 509V406q0-5 5-5t4 5v43M766 509l-44 43v105l44 44h82l38 38h9V674M848 431v-20q0-10 10-10h209q10 0 10 10v110h34v-33q0-5 5-5t6 5v213h-79l-38 38h-9"/>
            <path d="M857 465v-43q0-11 10-11h24v-10M923 401v10h25q10 0 10 11v103M962 525V422q0-11 10-11h27v-10M1030 401v10h27q10 0 10 11v23h10M1067 477h10M1067 477v37q0 11-10 11h-27M962 525h42"/>
            <path d="M775 408h38v23h35M775 411h35v20M813 411h35M813 421h35M830 401v10M848 431v34M848 487v22M766 440h9M766 449h9M766 490h82M857 487h-14M843 484h14M857 487v22h38v15h31M895 529h31M895 529v62M957 529h46M895 674h31M964 674h32"/>
            <path d="M775 518h102q9 0 9 11v62M886 664v27h-68M886 664h40M964 664h32M996 591v148M1000 591v100h67v10M1098 701v-10h14v-34h10M1122 625h-10v-34M1000 590h4M1031 590h81M1031 586h81v-57M1032 529h80M1035 529v29M1039 529v29M1035 558h4"/>
            <path d="M731 542l7 7-7 8v96l8 8-8 7M722 589h9M722 620h9M755 520l9 8 11-10M731 668l3 3M756 690l5-6 8 7h22v10M1085 521v8M1104 521v8M1085 526h19"/>
            <!-- doors -->
            <path d="M953 527v-26h-2v26M951 501q-20 1-23 26M925 524h4v5h-4zM952 524h4v5h-4zM1004 527v-26h2v26M1006 501q20 1 24 26M1002 524h4v5h-4zM1029 524h4v5h-4zM1004 587v28h2v-28M1006 615q22-2 25-28M1000 586h4v5M1030 586h5v-5h-5zM1035 581h23v-2h-23M1058 579q-2-18-20-21M927 674v-21h2v21M929 653q11 4 15 18 4-14 16-18h4v21M962 653v21M848 465q-14 5-15 20h15"/>
            <!-- dashed headers -->
            <path stroke-dasharray="8 4" d="M895 509h62M766 440h82M775 444h73M886 602v52M895 602v52M996 530v52M1000 530v52M895 729h101M905 739h81M767 452v36M770 452v36"/>
            <!-- stair flight -->
            <path d="M775 499h72v19h-72zM775 509h72"/>
            <path v-for="x in stairs" :key="x" :d="`M${x} 500v17m3 -17v17`"/>
            <!-- bathroom -->
            <path d="M1089 530h22v56h-22zM1091 540q0-8 9-8t9 8v36q0 7-9 7t-9-7zM1040 538h6v11h-6zM1066 586q-3-12 7-12t8 12M1065 584h16"/>
            <circle cx="1100" cy="538" r="1"/><ellipse cx="1055" cy="544" rx="6" ry="5"/><ellipse cx="1055" cy="544" rx="4" ry="3"/>
            <!-- beds -->
            <path d="M989 428h58v50h-58zM993 428v50M1003 428v50M1040 428v50M1048 416h17v76h-17zM1061 416v76M1064 416v76M1048 428h13M1048 477h13M1053 416v12M1053 477v15"/>
            <rect x="1049" y="436" width="11" height="17" rx="3"/><rect x="1049" y="454" width="11" height="16" rx="3"/>
            <g v-for="y in [594, 659]" :key="y"><rect x="1052" :y="y" width="58" height="29" rx="2"/><path :d="`M1091 ${y}v29M1096 ${y + 3}h13M1096 ${y + 26}h13M1096 ${y}v29`"/></g>
            <g v-for="y in [629, 653]" :key="y"><rect x="1097" :y="y - 6" width="12" height="12"/><circle cx="1103" :cy="y" r="4"/></g>
            <!-- seating -->
            <g v-for="(s, k) in sofas" :key="k" :transform="`translate(${s.x} ${s.y}) rotate(${s.a})`">
              <rect x="-5" y="0" width="5" :height="s.len"/>
              <rect x="0" y="0" width="15" :height="s.len"/>
              <path v-if="s.len > 40" :d="`M0 ${s.len / 2}h15`"/>
              <g v-for="y in [0, s.len]" :key="y" :transform="`translate(0 ${y})`">
                <path d="M5-5h13v9H5zM5 0h13" fill="#222932"/><circle r="6" fill="#222932"/><circle r="2"/>
              </g>
            </g>
          </g>

          <g stroke="#1fb41f" stroke-width="1.500">
            <line v-for="(c, k) in chains" :key="k" :x1="c[0]" :y1="c[1]" :x2="c[2]" :y2="c[3]"/>
          </g>
          <rect v-for="(t, k) in ticks" :key="k" :x="t[0] - 1" :y="t[1] - 1" width="2" height="2" fill="#d5f5d5"/>
          <g v-for="(c, k) in columns" :key="k" fill="none"><circle :cx="c[0]" :cy="c[1]" r="4.500" stroke="#b2311f" stroke-width="2"/><path :d="`M${c[0] - 7} ${c[1]}h14M${c[0]} ${c[1] - 7}v14`" stroke="#274f8c"/></g>
          <g class="dims"><text v-for="(d, k) in dimH" :key="k" :x="d[1]" :y="d[2] + 3">{{ d[0] }}</text>
            <text v-for="(d, k) in dimV" :key="k" :transform="`translate(${d[1] + 3} ${d[2]}) rotate(-90)`">{{ d[0] }}</text>
            <text transform="translate(766 547) rotate(-50)">1.20</text><text transform="translate(766 660) rotate(45)">1.20</text></g>
          <g class="rooms"><text v-for="(r, k) in rooms" :key="k" :x="r[1]" :y="r[2]">{{ r[0] }}</text></g>

          <!-- coordinate system marker -->
          <path d="M0 893l7 8 8-8M7 901v7M65 958l15 15M80 958l-15 15M0 968h5v12H0M0 974h61" fill="none" stroke="#e8e8e8"/>
          <g transform="translate(1257 496)" fill="#fff" stroke="#111" stroke-width="1.500"><use href="#hand" width="28" height="28"/><path d="M11 13v6M16 13v6M20 14l-1 6" stroke-width="1"/></g>
        </g>
      </svg>

      <div class="viewlabel">][Top][2D Wireframe]</div>
      <div class="viewctl"><svg><use href="#vrestore"/></svg><svg><use href="#vclose"/></svg></div>

      <div class="cube">
        <svg viewBox="0 0 140 140" aria-hidden="true"><circle cx="70" cy="70" r="59" fill="none" stroke="#42474f" stroke-width="13"/><path d="M42 38h56v59H42z" fill="#b4b4b4"/><path d="M52 48h36v39H52z" fill="#a0a6ab"/></svg>
        <span class="top">TOP</span><span class="w">W</span><span class="e">E</span><span class="s">S</span>
      </div>
      <button class="wcs">WCS<i></i></button>

      <aside class="navbar" aria-label="Navigation bar">
        <svg viewBox="0 0 40 259"><g fill="none" stroke="#3f444a" stroke-width="1.500">
          <circle cx="33" cy="6" r="4"/><path d="M31 4l4 4M35 4l-4 4"/><path d="M20 21h13v13a13 13 0 1 1-13-13z"/><circle cx="20" cy="34" r="8"/><path d="M9 43l5-4M31 43l-5-4"/>
          <path d="M16 101L7 90c-1-3 2-3 4-1l3 3-3-12c0-2 3-3 4 0l2 8V75c0-3 3-3 3 0l1 12 2-11c1-2 4-1 3 1v11l4-7c1-2 3-1 3 1l-4 12-5 7z"/>
          <path d="M6 109l19 18M25 109L6 127M6 114v-5h5M20 109h5v5M6 122v5h5"/><circle cx="25" cy="127" r="6"/><path d="M29 132l5 5" stroke-width="3"/>
          <path d="M17 182v-20h-3l6-7 5 7h-3v20zM17 165c-16 3-16 12 3 11 17-1 17-9 5-11M12 172l-4 4 5 3"/>
          <path d="M6 208h7v7H6zM16 208h7v7h-7zM26 208h7v7h-7zM6 219h19v16H6z"/><circle cx="33" cy="252" r="4"/><path d="M31 252h4"/></g>
          <path d="M12 222l8 5-8 5zM17 59h7l-4 4zM17 146h7l-4 4zM17 193h7l-4 4z" fill="#3f444a"/></svg>
      </aside>

      <section class="props">
        <i class="lt"></i>
        <button class="big w-match"><svg class="ic40"><use href="#matchprops"/></svg><span>Match</span><span>Properties</span></button>
        <div class="plist">
          <label><svg class="ic"><use href="#wheel"/></svg><span class="combo color"><select aria-label="Object color"><option>ByLayer</option></select><i class="swatch"></i><i class="dn big-dn"></i></span></label>
          <label><svg class="ic"><use href="#weights"/></svg><span class="combo lineval"><select aria-label="Lineweight"><option>ByLayer</option></select><i class="rule"></i><i class="dn big-dn"></i></span></label>
          <label><svg class="ic"><use href="#types"/></svg><span class="combo lineval"><select aria-label="Linetype"><option>ByLayer</option></select><i class="rule"></i><i class="dn big-dn"></i></span></label>
        </div>
        <div class="pfoot"><svg class="launch"><use href="#launch-left"/></svg><span>Properties</span></div>
      </section>

      <div class="history"><p>Command: '_pan</p><p class="last">Press ESC or ENTER to exit, or right-click to display shortcut menu.</p></div>
      <div class="cli">
        <div class="grip"><i class="dots"></i><button aria-label="Close"><svg class="ic"><use href="#close"/></svg></button><button aria-label="Customize"><svg class="ic" viewBox="0 0 20 20"><path d="M2 18L13 7" stroke="#e8e8e8" stroke-width="3.500" stroke-linecap="round"/><path d="M17 1l-4 3v3h3l3-3q1 6-5 6-6-2-3-7 2-3 6-2z" fill="#e8e8e8"/></svg></button></div>
        <label class="entry"><svg class="pan"><use href="#hand" fill="#cfcfcf"/></svg><i class="dn big-dn"></i><input v-model="command" type="text" aria-label="Command"><i class="up"></i></label>
      </div>
      <div class="mark" lang="ar">خمسات</div>
    </main>
  </div>
</template>

<style>
body { margin: 0; background: #222932; overflow: hidden; }
</style>

<style scoped>
.app { height: 100vh; display: flex; flex-direction: column; background: #222932; color: #e4e6e9; font: 14px/20px "Noto Sans", "Open Sans", sans-serif; overflow: hidden; }
.defs { position: absolute; width: 0; height: 0; }
button { background: none; border: 0; padding: 0; margin: 0; color: inherit; font: inherit; display: flex; align-items: center; white-space: nowrap; flex: none; }
.ic { width: 20px; height: 20px; flex: none; display: block; overflow: visible; }
.ic40 { width: 40px; height: 40px; flex: none; display: block; overflow: visible; }
.dn, .up { width: 0; height: 0; border: 3px solid transparent; border-top: 4px solid #dcdcdc; border-bottom: 0; flex: none; }
.big-dn { border-width: 5px; border-top-width: 5px; border-bottom: 0; }
.up { border-top: 0; border-bottom: 4px solid #555; }
.dim { border-top-color: #888; }
.rt { border: 4px solid transparent; border-left: 5px solid #ddd; border-right: 0; }
.lt { border: 5px solid transparent; border-right: 5px solid #ddd; border-left: 0; }

.titlebar { height: 32px; display: flex; flex: none; position: relative; }
.logo { position: absolute; left: 0; top: 5px; width: 20px; height: 36px; }
.quick { width: 604px; padding-left: 39px; height: 26px; display: flex; align-items: center; gap: 10px; flex: none; }
.quick > .dn { margin: 0 -1px; }
.quick .redo { margin-left: 1px; }
.more { flex-direction: column; gap: 3px; margin-left: 2px; }
.more .bar { width: 10px; height: 2px; background: #ddd; }
.titlebar h1 { margin: 0; font: inherit; line-height: 30px; display: flex; gap: 20px; white-space: nowrap; }
.tools { margin-left: auto; display: flex; height: 26px; align-items: center; padding-right: 4px; }
.rt { margin-right: 8px; }
.keyword { width: 223px; height: 26px; box-sizing: border-box; border: 0; border-radius: 0; padding: 0 4px; background: #434d60; color: #ddd; font: italic 13px "Noto Sans", "Open Sans", sans-serif; }
.keyword::placeholder { color: #b4bac4; opacity: 1; }
.t-search { margin-left: 5px; }
.t-user { margin-left: 10px; width: 139px; gap: 7px; }
.t-user .dn { margin-left: auto; }
.t-cart { margin-left: 14px; }
.t-a360 { margin-left: 9px; gap: 7px; padding-right: 12px; border-right: 1px solid #454c56; height: 22px; }
.t-help { margin-left: 12px; gap: 10px; }
.t-help b { width: 20px; height: 20px; border-radius: 10px; background: #d9d9d9; color: #333; font-weight: 400; font-size: 15px; text-align: center; }
.t-min { margin-left: 85px; }
.t-res { margin-left: 10px; }
.t-close { margin-left: 11px; }

.tabs { height: 22px; display: flex; align-items: stretch; padding-left: 35px; flex: none; color: #a9adb3; }
.tabs button { padding: 0 12px; }
.tabs .active { background: #3b4453; color: #eceef0; }
.tabs .collapse { width: 19px; height: 9px; padding: 0; margin: 5px 6px 0 30px; background: #f2f2f2; justify-content: center; }
.tabs > .dn { align-self: center; }

.ribbon { display: flex; background: #3b4453; flex: none; height: 122px; overflow: hidden; }
.panel { display: flex; flex-direction: column; border-right: 1px solid #262d37; box-sizing: border-box; flex: none; }
.body { display: flex; height: 97px; padding-top: 4px; box-sizing: border-box; flex: none; }
.ptitle { display: flex; align-items: center; justify-content: center; gap: 7px; height: 20px; padding-top: 5px; line-height: 20px; }
.draw { width: 257px; } .draw .ptitle { padding-right: 20px; }
.modify { width: 316px; } .modify .body { padding-left: 7px; }
.annotation { width: 236px; } .annotation .body { padding-left: 1px; }
.layers { width: 341px; } .layers .body { padding-left: 4px; }
.block { width: 202px; } .groups { width: 85px; } .utilities { width: 121px; } .clipboard { width: 99px; }
.view { flex: 1; border: 0; } .view .ptitle { justify-content: flex-start; padding-left: 6px; }
.launch { width: 8px; height: 8px; }
.view .launch { margin-left: 4px; }
.big { flex-direction: column; padding-top: 3px; }
.big svg { margin-bottom: 5px; }
.big .dn { margin-top: 4px; }
.w-line { width: 54px; margin-left: -22px; } .w-poly { width: 54px; } .w-circle { width: 68px; } .w-arc { width: 46px; }
.w-text { width: 56px; } .w-dim { width: 76px; } .w-layer { width: 70px; } .w-insert { width: 52px; }
.w-group { width: 50px; } .w-measure { width: 88px; } .w-paste { width: 66px; } .w-base { width: 76px; padding-top: 10px; }
.w-base .dn { margin-top: 2px; }
.col { display: flex; flex-direction: column; }
.row { height: 31px; gap: 7px; }
.row .dn { margin-left: 5px; }
.c-shapes { padding-left: 7px; }
.c-shapes .row { gap: 5px; }
.c-mod1 { width: 91px; } .c-mod2 { width: 88px; } .c-mod3 { width: 95px; }
.c-ann { padding-left: 6px; } .c-block { padding-left: 3px; }
.c-group .row { width: 30px; justify-content: center; }
.c-group .on { background: #365e80; box-shadow: inset 0 0 0 1px #7cc0f2; height: 28px; margin-top: 1px; }
.c-util { padding-left: 3px; } .c-clip { padding-left: 3px; }
.combo { position: relative; display: block; height: 28px; box-sizing: border-box; background: #4c586b; border: 1px solid #262d37; }
.combo select { appearance: none; width: 100%; height: 100%; border: 0; background: none; color: #eef0f2; font: inherit; display: block; padding: 0; }
.combo .dn { position: absolute; right: 3px; top: 11px; pointer-events: none; }
.layercol { padding-left: 4px; width: 259px; }
.layercombo { margin: 1px 0 2px; height: 28px; }
.layercombo select { padding-left: 101px; }
.deco { position: absolute; left: 3px; top: 3px; display: flex; gap: 4px; pointer-events: none; }
.swatch { width: 16px; height: 16px; background: #fff; border: 1px solid #111; }
.deco .swatch { margin: 2px 0 0 2px; }
.toolline { display: flex; gap: 10px; padding-left: 3px; }

.files { height: 33px; display: flex; align-items: flex-end; padding-left: 5px; flex: none; border-bottom: 5px solid #3b4453; color: #aeb3ba; }
.file { display: flex; align-items: center; width: 141px; height: 26px; padding: 2px 0 0 12px; background: #2f3743; border-radius: 10px 12px 0 0; }
.file.first { width: 142px; padding-left: 13px; }
.file.active { width: 140px; padding-left: 13px; background: #3b4453; color: #eceef0; }
.x { margin-left: auto; margin-right: 12px; opacity: .75; }
.plus { width: 26px; height: 19px; margin: 0 0 4px 10px; background: #2f3743; border-radius: 4px 8px 2px 8px; justify-content: center; position: relative; }
.plus::before { content: ""; width: 10px; height: 2px; background: #b4b8bd; }
.plus::after { content: ""; position: absolute; width: 2px; height: 10px; background: #b4b8bd; }

.canvas { flex: 1; position: relative; min-height: 0; }
.model { position: absolute; width: 100%; height: 100%; }
.dims text { fill: #f08a8a; stroke: #f08a8a; stroke-width: .3px; font: bold 7px "Liberation Sans", sans-serif; text-anchor: middle; }
.rooms text { fill: #e8eaec; stroke: #222932; stroke-width: 2px; paint-order: stroke; font: 11px "Liberation Sans", sans-serif; }
.viewlabel { position: absolute; left: -2px; top: 5px; font-size: 14px; }
.viewctl { position: absolute; right: 11px; top: 10px; display: flex; gap: 11px; }
.viewctl svg { width: 14px; height: 14px; }
.cube { position: absolute; right: 21px; top: 51px; width: 140px; height: 140px; font: bold 22px/22px "Liberation Sans", sans-serif; color: #b4b6b8; }
.cube svg { width: 140px; height: 140px; display: block; }
.cube span { position: absolute; }
.cube .top { left: 0; right: 0; text-align: center; top: 59px; font-size: 14px; color: #4b5157; }
.cube .w { left: -2px; top: 59px; } .cube .e { right: 0; top: 59px; } .cube .s { left: 63px; top: 121px; }
.wcs { position: absolute; right: 63px; top: 215px; width: 57px; height: 21px; background: #81868f; border: 1px solid #9a9ea8; border-radius: 5px; color: #3d434b; font: 13px "Liberation Sans", sans-serif; padding: 0 4px; gap: 7px; box-sizing: border-box; }
.wcs i { border: 5px solid transparent; border-top: 5px solid #9ba0a8; border-bottom: 0; }
.navbar { position: absolute; right: 3px; top: 267px; width: 40px; height: 259px; background: #595e63; border-radius: 4px; }
.navbar svg { width: 40px; height: 259px; display: block; }

.props { position: absolute; right: 56px; top: -18px; width: 346px; height: 122px; background: #3b4453; display: grid; grid-template-columns: 16px 76px 1fr; grid-template-rows: 98px 1fr; }
.props .lt { align-self: center; justify-self: center; margin-top: 8px; }
.w-match { padding-top: 8px; align-self: start; }
.w-match svg { margin: 0 0 5px; }
.plist { display: grid; gap: 2px; padding: 6px 3px 0 3px; align-content: start; }
.plist label { display: flex; align-items: center; gap: 3px; }
.plist .combo { flex: 1; }
.color select { padding-left: 45px; }
.color .swatch { position: absolute; left: 14px; top: 3px; width: 18px; height: 18px; border-color: #ddd; }
.lineval select { padding-left: 86px; }
.rule { position: absolute; left: 4px; top: 12px; width: 80px; height: 1px; background: #eef; }
.pfoot { grid-column: 1 / -1; display: flex; align-items: center; padding-left: 6px; }
.pfoot span { margin: 3px auto 0 133px; }

.history { position: absolute; left: 446px; bottom: 40px; display: flex; flex-direction: column; align-items: flex-start; gap: 6px; }
.history p { margin: 0; padding: 0 2px; border-radius: 3px; background: #505458; color: #b9bbbd; font: 15px/19px "DejaVu Sans Mono", monospace; white-space: nowrap; }
.history .last { background: #606365; color: #f0f0f0; }
.cli { position: absolute; left: 369px; right: 391px; bottom: 0; height: 36px; display: flex; }
.grip { width: 70px; background: #2e3440; border-radius: 4px 0 0 0; display: flex; align-items: center; gap: 4px; box-sizing: border-box; padding-left: 5px; padding-top: 3px; }
.grip button:last-child { margin-left: 6px; }
.grip .ic { width: 18px; height: 18px; }
.dots { width: 6px; height: 20px; background: radial-gradient(circle, #ddd 1px, transparent 1px) 0 0 / 4px 4px; }
.entry { flex: 1; background: #fff; border-radius: 2px 3px 0 0; display: flex; align-items: center; padding: 3px 5px 0; }
.pan { width: 20px; height: 20px; }
.entry .dn { border-top-color: #666; margin: 0 7px 0 2px; }
.entry input { flex: 1; min-width: 0; border: 0; padding: 0; background: none; color: #000; font: bold 15px "DejaVu Sans Mono", monospace; }
.entry .up { border-left-width: 5px; border-right-width: 5px; border-bottom-width: 5px; }
.mark { position: absolute; left: 834px; bottom: 8px; color: #bbb; opacity: .4; font: bold 62px/62px "DejaVu Sans", sans-serif; pointer-events: none; }
</style>
